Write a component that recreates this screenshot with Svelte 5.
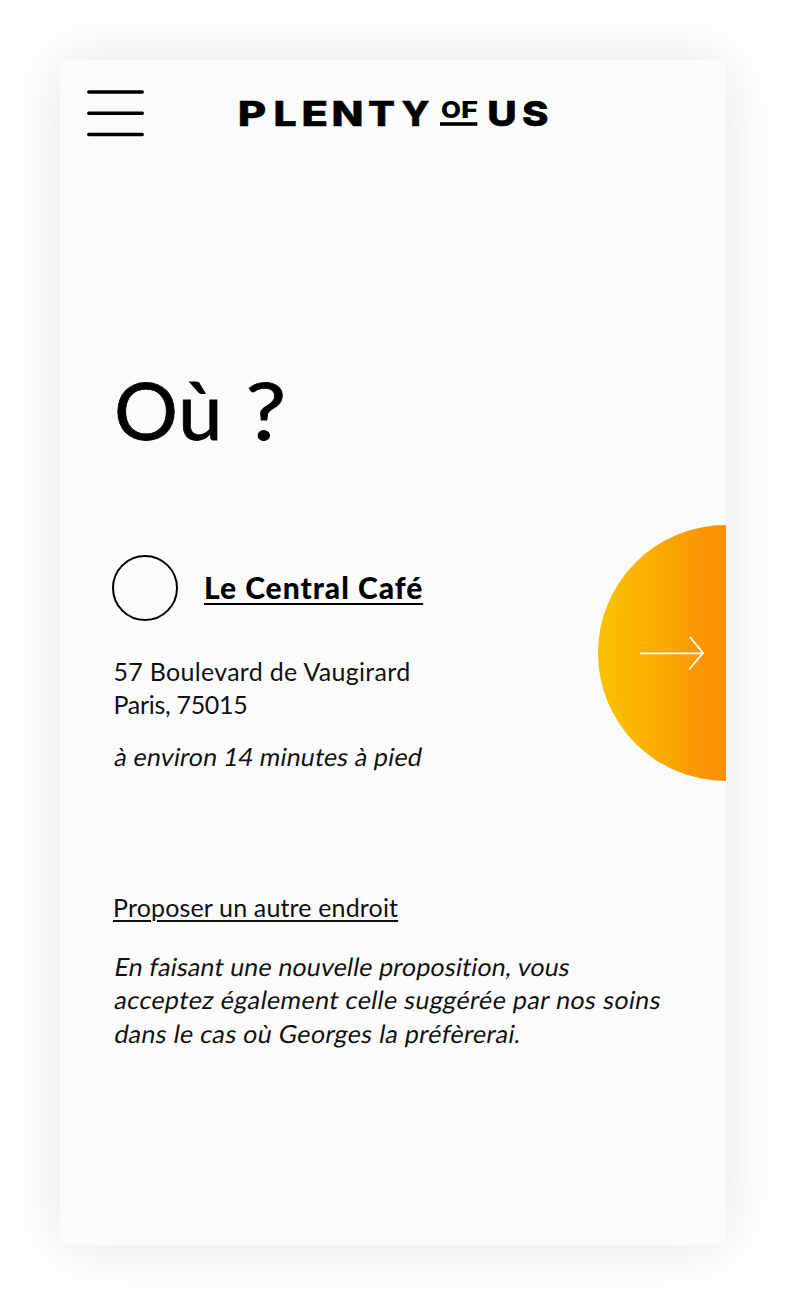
<script>
  const address = ['57 Boulevard de Vaugirard', 'Paris, 75015'];
  const note = [
    'En faisant une nouvelle proposition, vous',
    'acceptez également celle suggérée par nos soins',
    'dans le cas où Georges la préfèrerai.'
  ];
</script>

<div class="page">
  <main class="screen">
    <header>
      <button class="menu" aria-label="Menu">
        <svg width="57" height="47" viewBox="0 0 57 47">
          <path d="M1.8 2H55.2M1.8 23.3H55.2M1.8 44.6H55.2" />
        </svg>
      </button>
      <svg class="logo" width="320" height="40" viewBox="0 0 320 40">
        <g class="big">
          <text x="2.8" y="31.7" textLength="28.5" lengthAdjust="spacingAndGlyphs">P</text>
          <text x="38.6" y="32.3" textLength="23.2" lengthAdjust="spacingAndGlyphs">L</text>
          <text x="66.4" y="31.7" textLength="26.5" lengthAdjust="spacingAndGlyphs">E</text>
          <text x="96.6" y="31.7" textLength="32" lengthAdjust="spacingAndGlyphs">N</text>
          <text x="133" y="32.3" textLength="27" lengthAdjust="spacingAndGlyphs">T</text>
          <text x="166.5" y="32.3" textLength="28" lengthAdjust="spacingAndGlyphs">Y</text>
          <text x="252.2" y="32.3" textLength="29.5" lengthAdjust="spacingAndGlyphs">U</text>
          <text x="287" y="32.3" textLength="26.5" lengthAdjust="spacingAndGlyphs">S</text>
        </g>
        <g class="small">
          <text x="206" y="24.3" textLength="20" lengthAdjust="spacingAndGlyphs">O</text>
          <text x="226" y="24.3" textLength="17" lengthAdjust="spacingAndGlyphs">F</text>
        </g>
        <rect x="205" y="28.2" width="37.3" height="3.6" />
      </svg>
    </header>

    <h1>Où <span>?</span></h1>

    <div class="middle">
      <section class="place">
        <div class="choice">
          <span class="radio"></span>
          <a class="name" href="#cafe">Le Central Café</a>
        </div>
        <p class="address">
          {#each address as line}<span>{line}</span>{/each}
        </p>
        <p class="walk"><span>à environ 14 minutes à pied</span></p>
      </section>
      <button class="next" aria-label="Suivant">
        <svg width="128" height="256" viewBox="0 0 128 256">
          <path d="M42 128.4H106M92 112L105 128L91 144.5" />
        </svg>
      </button>
    </div>

    <section class="other">
      <a class="suggest" href="#autre">Proposer un autre endroit</a>
      <p class="note">
        {#each note as line}<span>{line}</span>{/each}
      </p>
    </section>
  </main>
</div>

<style>
  :global(body) {
    background: #fff;
  }
  .page {
    box-sizing: border-box;
    height: 1305px;
    padding: 60px;
    overflow: hidden;
    font-family: Lato, 'Liberation Sans', sans-serif;
    font-variant-ligatures: none;
    color: #000;
  }
  .screen {
    display: flex;
    flex-direction: column;
    height: 1185px;
    background: #fbfbfb;
    box-shadow: 0 0 60px rgba(0, 0, 0, 0.1);
  }
  header {
    display: flex;
    align-items: flex-start;
    padding: 30px 0 0 27px;
    height: 90px;
    box-sizing: border-box;
  }
  button {
    border: 0;
    padding: 0;
    background: none;
  }
  .menu svg {
    display: block;
    stroke: #000;
    stroke-width: 3.5;
    stroke-linecap: round;
  }
  .logo {
    margin: 4px 0 0 91px;
  }
  .logo text {
    font-family: Inter, sans-serif;
  }
  .big text {
    font-size: 34.5px;
    font-weight: 800;
    stroke: #000;
    stroke-width: 0.5;
  }
  .small text {
    font-size: 23.5px;
    font-weight: 800;
  }
  h1 {
    margin: 219px 0 0 54px;
    font-size: 80px;
    line-height: 80px;
    font-weight: 400;
    letter-spacing: 0.5px;
    word-spacing: 2px;
    white-space: nowrap;
    -webkit-text-stroke: 0.8px #000;
  }
  h1 span {
    display: inline-block;
    transform: scaleX(1.14);
    transform-origin: 10% 50%;
  }
  .middle {
    display: flex;
    justify-content: space-between;
    margin-top: 76px;
  }
  .place {
    padding: 30px 0 0 52px;
  }
  .choice {
    display: flex;
    align-items: center;
    gap: 26px;
  }
  .radio {
    box-sizing: border-box;
    width: 66px;
    height: 66px;
    border: 2px solid #000;
    border-radius: 50%;
  }
  .name {
    padding-bottom: 2px;
    color: inherit;
    font-size: 30px;
    line-height: 34px;
    font-weight: 900;
    letter-spacing: 0.98px;
    text-decoration: underline;
    text-decoration-thickness: 2px;
    text-underline-offset: 4px;
  }
  p {
    margin: 0;
    font-size: 25px;
    line-height: 33.7px;
    color: #111;
    white-space: nowrap;
  }
  p span {
    display: block;
    width: max-content;
  }
  .address {
    padding: 33.6px 0 0 1.5px;
    letter-spacing: 0.3px;
  }
  .address span:last-child {
    letter-spacing: -0.3px;
  }
  .walk {
    padding: 18.4px 0 0 1px;
    letter-spacing: 0.17px;
  }
  .walk span,
  .note span {
    transform: skewX(-10deg);
    transform-origin: 0 80%;
  }
  .next {
    width: 128px;
    height: 256px;
    border-radius: 128px 0 0 128px;
    background: linear-gradient(90deg, #f9be00 0 12%, #fba903 50%, #fc9003 92%);
  }
  .next svg {
    display: block;
    fill: none;
    stroke: #fff;
    stroke-width: 1.7;
  }
  .other {
    padding: 109px 0 0 53px;
  }
  .suggest {
    display: block;
    width: max-content;
    color: #111;
    font-size: 25px;
    line-height: 34px;
    letter-spacing: 0.15px;
    text-decoration: underline;
    text-decoration-thickness: 2px;
    text-underline-offset: 3px;
  }
  .note {
    padding: 25.6px 0 0;
    letter-spacing: 0.17px;
  }
  .note span:nth-child(2) {
    letter-spacing: 0.41px;
  }
  .note span:nth-child(3) {
    letter-spacing: 0.35px;
  }
</style>
